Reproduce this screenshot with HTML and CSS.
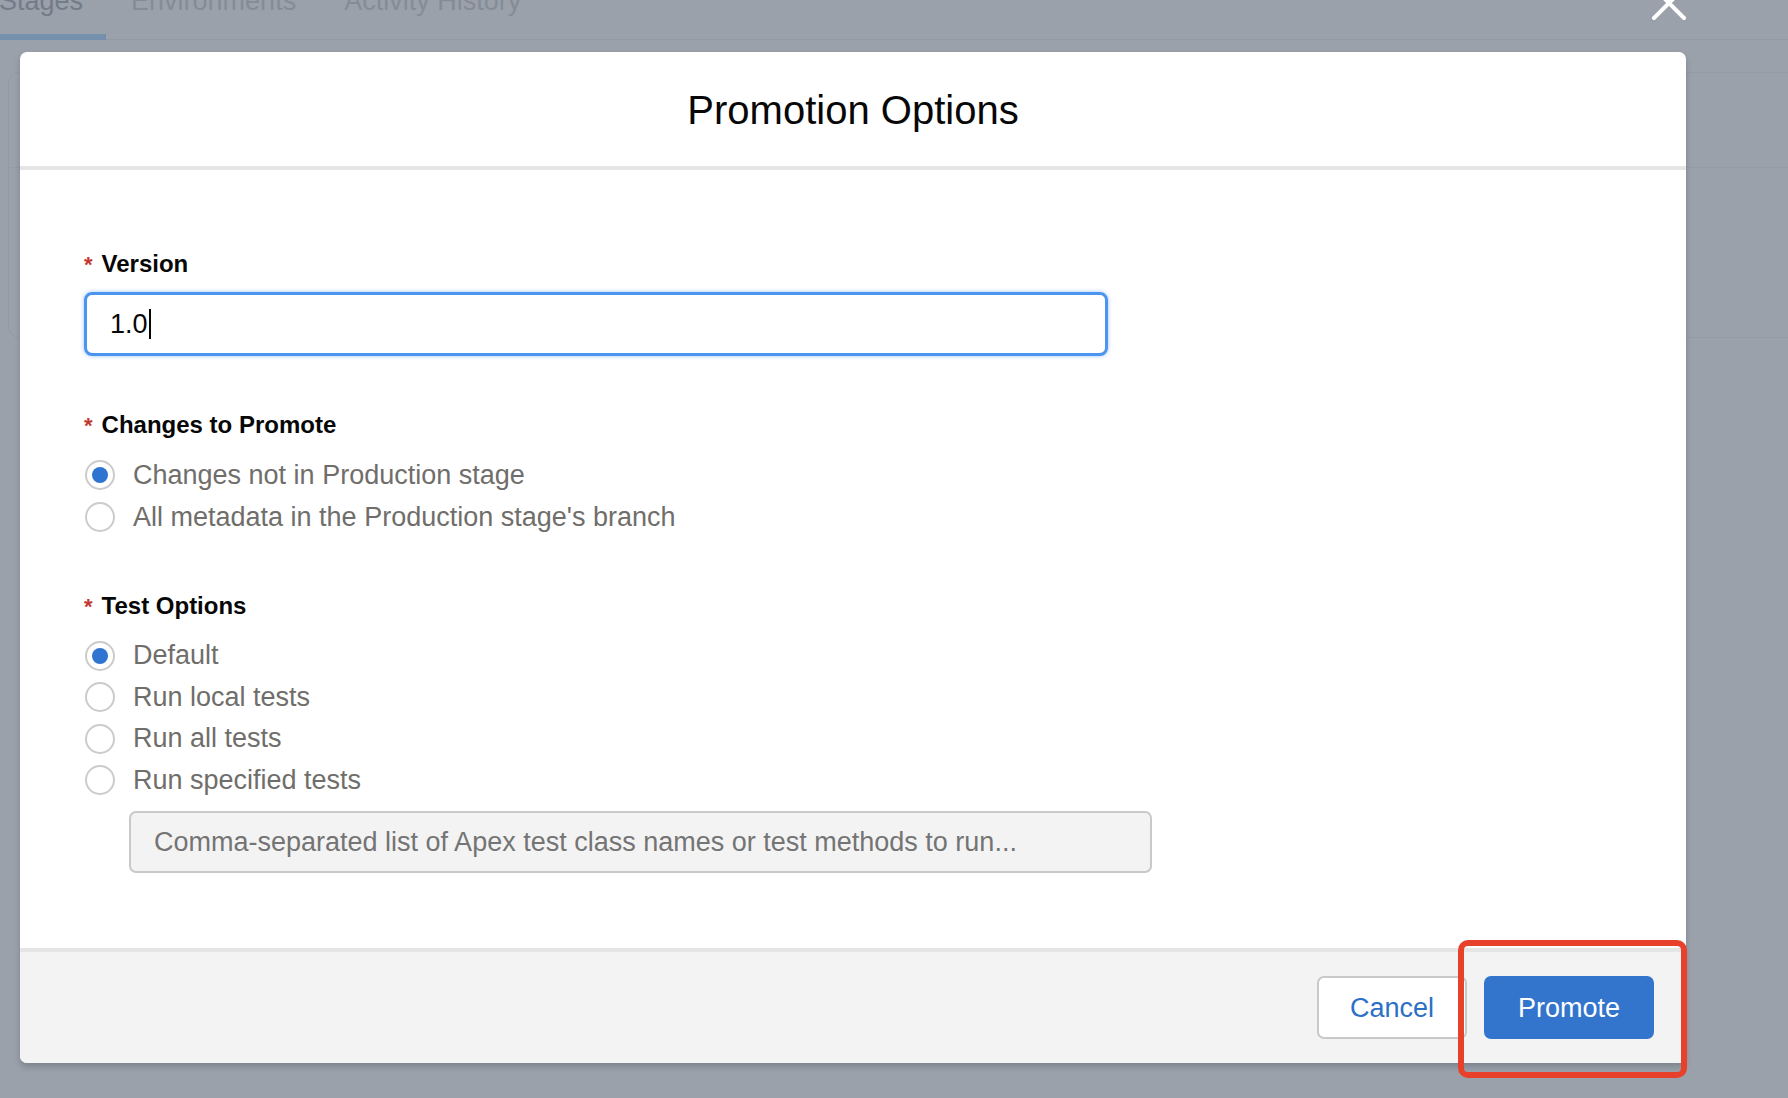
FILE: index.html
```html
<!DOCTYPE html>
<html lang="en">
<head>
<meta charset="utf-8">
<title>Promotion Options</title>
<link rel="stylesheet" href="styles.css">
</head>
<body>
<div class="page">
  <nav class="tabs">
    <div class="tab active">Stages</div>
    <div class="tab">Environments</div>
    <div class="tab">Activity History</div>
  </nav>
  <div class="bgcard">
    <div class="bgcard-head"></div>
  </div>

  <svg class="close" width="36" height="36" viewBox="0 0 36 36" aria-label="Close">
    <path d="M3 3 L33 33 M33 3 L3 33" stroke="#ffffff" stroke-width="4" stroke-linecap="round" fill="none"/>
  </svg>

  <section class="modal">
    <header class="modal-header">
      <h2 class="modal-title">Promotion Options</h2>
    </header>
    <div class="modal-body">
      <div class="field">
        <div class="label"><span class="req">*</span>Version</div>
        <div class="input focused"><span class="value">1.0</span><span class="caret"></span></div>
      </div>
      <div class="field field-gap">
        <div class="label"><span class="req">*</span>Changes to Promote</div>
        <div class="radios">
          <div class="radio checked"><span class="circle"></span><span class="rtext">Changes not in Production stage</span></div>
          <div class="radio"><span class="circle"></span><span class="rtext">All metadata in the Production stage's branch</span></div>
        </div>
      </div>
      <div class="field field-gap2">
        <div class="label"><span class="req">*</span>Test Options</div>
        <div class="radios tight">
          <div class="radio checked"><span class="circle"></span><span class="rtext">Default</span></div>
          <div class="radio"><span class="circle"></span><span class="rtext">Run local tests</span></div>
          <div class="radio"><span class="circle"></span><span class="rtext">Run all tests</span></div>
          <div class="radio"><span class="circle"></span><span class="rtext">Run specified tests</span></div>
        </div>
        <div class="input disabled"><span class="placeholder">Comma-separated list of Apex test class names or test methods to run...</span></div>
      </div>
    </div>
    <footer class="modal-footer">
      <button class="btn btn-neutral">Cancel</button>
      <button class="btn btn-brand">Promote</button>
    </footer>
  </section>

  <div class="annotation"></div>
</div>
</body>
</html>
```
FILE: styles.css
```css
html, body {
  margin: 0;
  padding: 0;
}
body {
  font-family: "Liberation Sans", Arial, Helvetica, sans-serif;
}
.page {
  position: relative;
  width: 1788px;
  height: 1098px;
  overflow: hidden;
  background: #9aa1ab;
}

/* background page (behind overlay) */
.tabs {
  display: flex;
  height: 40px;
  box-sizing: border-box;
  border-bottom: 1px solid #929aa4;
  margin-left: -26px;
}
.tab {
  box-sizing: border-box;
  height: 52px;
  margin-top: -12px;
  padding: 0 23px 0 25px;
  font-size: 27px;
  line-height: 27px;
  color: #858c96;
  border-bottom: 6px solid transparent;
}
.tab.active {
  color: #737c88;
  border-bottom-color: #7590ad;
}
.bgcard {
  margin: 32px 0 0 8px;
  height: 266px;
  box-sizing: border-box;
  border: 1px solid #949ba5;
  border-right: none;
  border-radius: 12px 0 0 12px;
}
.bgcard-head {
  height: 94px;
  border-bottom: 1px solid #949ba5;
}

.close {
  position: absolute;
  left: 1651px;
  top: -15px;
}

/* modal */
.modal {
  position: absolute;
  left: 20px;
  top: 52px;
  width: 1666px;
  height: 1011px;
  background: #ffffff;
  border-radius: 7px;
  box-shadow: 0 4px 6px rgba(0, 0, 0, 0.18);
  display: flex;
  flex-direction: column;
  overflow: hidden;
}
.modal-header {
  height: 118px;
  box-sizing: border-box;
  border-bottom: 4px solid #e5e5e5;
  display: flex;
  align-items: center;
  justify-content: center;
  padding-top: 2px;
}
.modal-title {
  margin: 0;
  font-size: 40px;
  font-weight: 400;
  color: #080707;
  line-height: 48px;
}
.modal-body {
  flex: 1;
  padding: 79px 64px 0;
}
.field-gap {
  margin-top: 54px;
}
.field-gap2 {
  margin-top: 53px;
}
.label {
  font-size: 24px;
  font-weight: 700;
  line-height: 30px;
  height: 30px;
  color: #080707;
}
.req {
  font-weight: 700;
  font-size: 22px;
  color: #c23934;
  margin-right: 9px;
}
.input {
  box-sizing: border-box;
  display: flex;
  align-items: center;
  font-size: 27px;
}
.input.focused {
  margin-top: 13px;
  width: 1024px;
  height: 64px;
  border: 3px solid #4b94f0;
  border-radius: 8px;
  box-shadow: 0 0 4px rgba(75, 148, 240, 0.55);
  padding-left: 23px;
  color: #080707;
}
.caret {
  display: inline-block;
  width: 2px;
  height: 30px;
  background: #080707;
  margin-left: 1px;
}
.input.disabled {
  margin: 10px 0 0 45px;
  width: 1023px;
  height: 62px;
  background: #f3f3f3;
  border: 2px solid #c9c9c9;
  border-radius: 7px;
  padding-left: 23px;
}
.placeholder {
  color: #747474;
}
.radios {
  margin-top: 14px;
}
.radio {
  display: flex;
  align-items: center;
  height: 42px;
}
.radios.tight .radio {
  height: 41.5px;
}
.circle {
  box-sizing: border-box;
  width: 30px;
  height: 30px;
  margin: 0 18px 0 1px;
  border: 2px solid #cbcbcb;
  border-radius: 50%;
  background: #ffffff;
  display: flex;
  align-items: center;
  justify-content: center;
}
.radio.checked .circle::after {
  content: "";
  width: 16px;
  height: 16px;
  border-radius: 50%;
  background: #2f74d0;
}
.rtext {
  font-size: 27px;
  color: #706e6b;
}

/* footer */
.modal-footer {
  height: 115px;
  box-sizing: border-box;
  border-top: 4px solid #e5e5e5;
  background: #f3f3f3;
  display: flex;
  justify-content: flex-end;
  align-items: center;
  gap: 17px;
  padding-right: 32px;
}
.btn {
  box-sizing: border-box;
  height: 63px;
  border-radius: 7px;
  font-family: inherit;
  font-size: 27px;
  padding: 2px 0 0;
  cursor: pointer;
}
.btn-neutral {
  width: 150px;
  background: #ffffff;
  border: 2px solid #c9c9c9;
  color: #2c6fc6;
}
.btn-brand {
  width: 170px;
  background: #3375cd;
  border: 2px solid #3375cd;
  color: #ffffff;
}

/* red highlight annotation */
.annotation {
  position: absolute;
  left: 1458px;
  top: 940px;
  width: 229px;
  height: 138px;
  box-sizing: border-box;
  border: 6px solid #e8412b;
  border-radius: 10px;
}
```
